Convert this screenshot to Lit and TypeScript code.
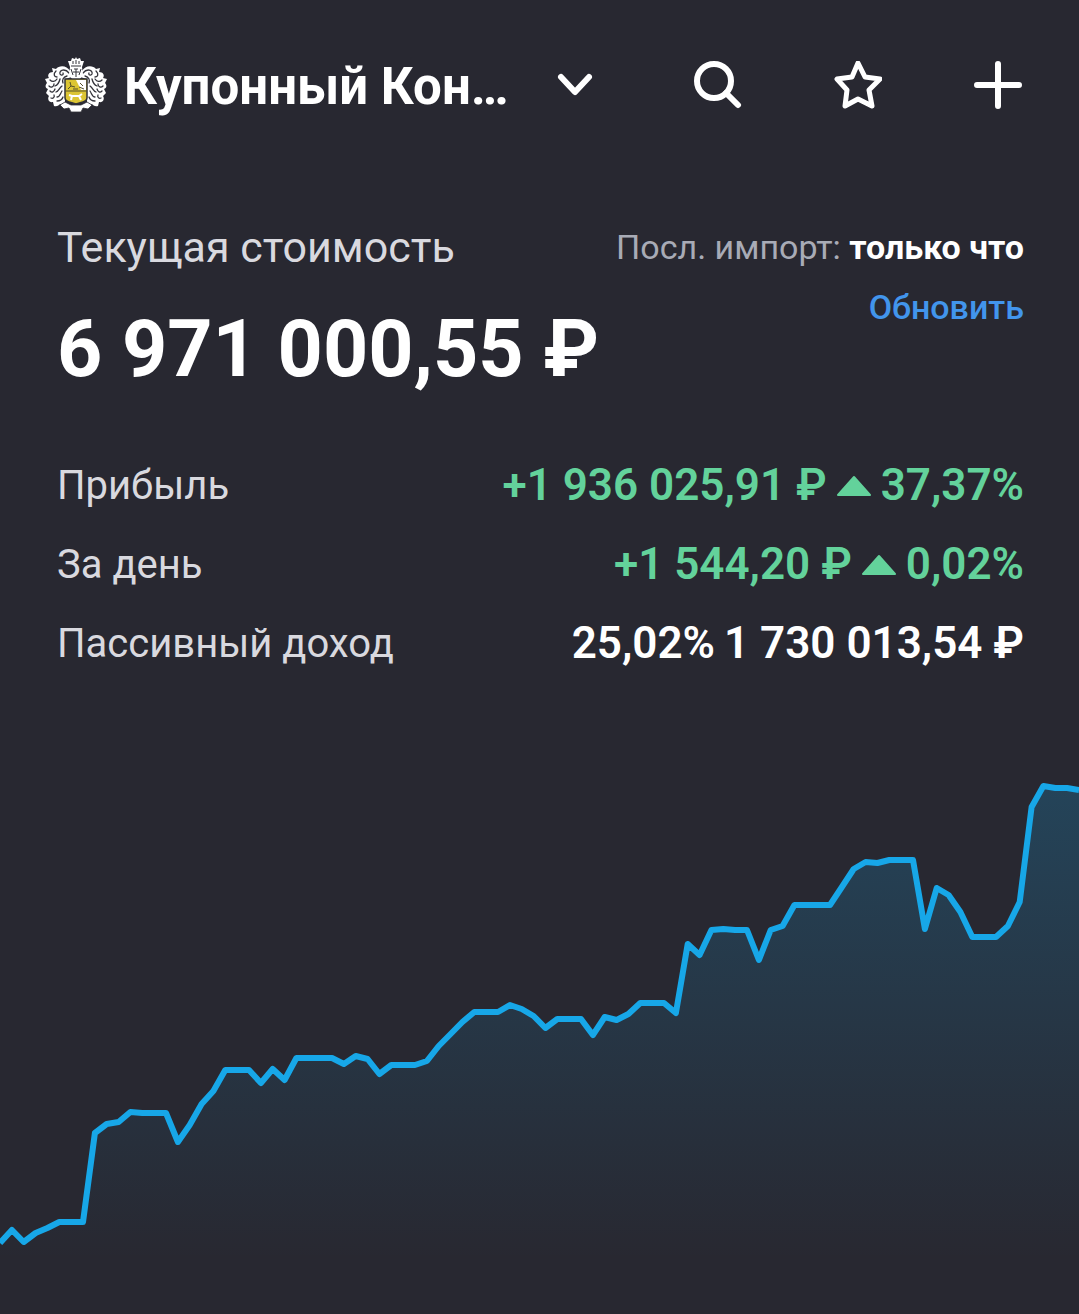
import { html, css, svg, nothing, LitElement } from 'lit'
import { customElement, property } from 'lit/decorators.js'

type Row = { label: string; amount: string; percent: string; growth: boolean }

const ROWS: readonly Row[] = [
  { label: 'Прибыль', amount: '+1 936 025,91 ₽', percent: '37,37%', growth: true },
  { label: 'За день', amount: '+1 544,20 ₽', percent: '0,02%', growth: true },
  { label: 'Пассивный доход', amount: '1 730 013,54 ₽', percent: '25,02%', growth: false },
]

// distance of every point from the top of the chart
const POINTS: readonly number[] = [
  483, 470, 482, 473, 468, 462, 462, 462, 373, 364, 362, 352, 353, 353, 353, 382, 365, 344, 331, 310, 310, 310, 323,
  309, 320, 298, 298, 298, 298, 304, 296, 299, 314, 305, 305, 305, 301, 286, 274, 262, 252, 252, 252, 245, 249, 256,
  268, 259, 259, 259, 275, 257, 260, 254, 243, 243, 243, 253, 184, 195, 170, 169, 170, 170, 200, 170, 166, 145, 145,
  145, 145, 127, 109, 102, 103, 100, 100, 100, 169, 128, 135, 152, 177, 177, 177, 166, 142, 47, 26, 28, 28, 30,
]

@customElement('value-chart')
export class ValueChart extends LitElement {
  static styles = css`
    :host {
      display: block;
    }

    svg {
      display: block;
      width: 100%;
      height: auto;
    }

    .line {
      fill: none;
      stroke: #17a7e8;
      stroke-width: 6;
      stroke-linejoin: round;
    }
  `

  @property({ attribute: false })
  points: readonly number[] = []

  render() {
    const width = 1079
    const height = 554
    const step = width / (this.points.length - 1)
    const line = this.points.map((y, i) => `${(i * step).toFixed(1)},${y}`).join(' ')

    return html`
      <svg viewBox="0 0 ${width} ${height}" role="img" aria-label="График стоимости">
        <defs>
          <linearGradient id="fade" gradientUnits="userSpaceOnUse" x1="0" y1="26" x2="0" y2="500">
            <stop offset="0" stop-color="#17a7e8" stop-opacity="0.22" />
            <stop offset="1" stop-color="#17a7e8" stop-opacity="0" />
          </linearGradient>
        </defs>
        <polygon points="0,${height} ${line} ${width},${height}" fill="url(#fade)" />
        <polyline class="line" points=${line} />
      </svg>
    `
  }
}

// one side of the mantling around the shield, mirrored for the other one
const mantling = svg`
  <path fill="#fff" d="M25 14 C22 8 14 8 11 12 L7 11 L8 15 C4 15 2 18 4 21 L0 22 L2 26 C0 28 0 31 3 32 L1 36 L4 39 C2 42 4 46 8 45 L9 49 C12 50 14 48 15 47 L20 48 L20 22 L27 20 Z" />
  <g fill="none" stroke="#34343b" stroke-width="1.3" stroke-linecap="round">
    <path d="M24 16 C20 11 14 13 15 17 C16 19 19 18 18 16" />
    <path d="M11 14 C8 17 9 20 12 20 M12 22 C10 25 7 25 5 23" />
    <path d="M22 19 C18 20 17 23 18 26 M15 22 C14 26 13 28 10 29 M4 29 C6 31 9 30 9 27" />
    <path d="M17 29 C14 31 14 34 11 35 M5 34 C7 36 9 35 10 32" />
    <path d="M17 34 C15 37 15 40 12 40 M6 41 C8 42 10 40 9 38" />
    <path d="M18 40 C17 43 15 44 12 44" />
  </g>
`

const crest = html`
  <svg class="crest" viewBox="0 0 62 56" aria-hidden="true">
    ${mantling}
    <g transform="matrix(-1 0 0 1 62 0)">${mantling}</g>
    <path fill="#fff" d="M25 10 L23 4 L26 4 L27 1 L30 2 L31 0 L32 2 L35 1 L36 4 L39 4 L37 10 L38 18 L35 22 H27 L24 18 Z" />
    <g fill="none" stroke="#34343b" stroke-width="1">
      <path d="M26 9 H36 M28 4 V7 M31 3 V7 M34 4 V7" />
      <path d="M26 12 L28 18 M36 12 L34 18 M29 12 H33 M31 12 V20 M28 15 H34" />
    </g>
    <path fill="#dcc533" stroke="#303037" stroke-width="1.5" d="M20 22 H42 V41 C42 45 37 45 31 47 C25 45 20 45 20 41 Z" />
    <path fill="#fff" d="M31 23 H41 V33 H36 Z" />
    <path d="M20 34 H42" stroke="#55502b" />
    <path d="M23 32 L26 29 L25 25 M26 29 L30 30 M28 32 H33 M35 26 L38 29 M34 30 L39 32" fill="none" stroke="#55502b" />
    <path d="M24 38 L27 39 L34 39 L37 37 M27 39 L26 43 M34 39 L36 43" fill="none" stroke="#fff" stroke-width="2" />
    <path fill="#fff" stroke="#303037" stroke-width="0.8" d="M15 48 L20 45 L26 48 H36 L42 45 L47 48 L43 52 L38 51 L36 55 H26 L24 51 L19 52 Z" />
  </svg>
`

@customElement('app-root')
export class AppRoot extends LitElement {
  static styles = css`
    :host {
      display: block;
      min-height: 100vh;
      background: #282831;
      color: #fff;
      font-family: Roboto, 'Noto Sans', sans-serif;
    }

    button {
      margin: 0;
      padding: 0;
      border: none;
      background: none;
      color: inherit;
      font: inherit;
      cursor: pointer;
    }

    svg {
      display: block;
      flex: none;
    }

    .header {
      display: flex;
      align-items: center;
      gap: 92px;
      height: 170px;
      padding: 0 57px 0 45px;
    }

    .account {
      display: flex;
      flex: 1;
      align-items: center;
      min-width: 0;
      text-align: left;
    }

    .crest {
      width: 62px;
      height: 56px;
    }

    .name {
      margin-left: 17px;
      padding-top: 4px;
      font-size: 51px;
      font-weight: 700;
      line-height: 60px;
      white-space: nowrap;
    }

    .chevron {
      margin-left: 48px;
    }

    .icon {
      fill: none;
      stroke: #fff;
      stroke-width: 6;
      stroke-linecap: round;
      stroke-linejoin: round;
    }

    .summary {
      padding: 51px 55px 0 57px;
    }

    .top {
      display: flex;
      justify-content: space-between;
      line-height: 52px;
    }

    .caption {
      margin: 0;
      color: #d9d9df;
      font-size: 43px;
      font-weight: 400;
    }

    .total {
      margin: 28px 0 0;
      font-size: 79px;
      font-weight: 700;
      line-height: 96px;
      white-space: nowrap;
    }

    .import {
      display: flex;
      flex-direction: column;
      align-items: flex-end;
      gap: 8px;
      color: #a8abb6;
      font-size: 34px;
      white-space: nowrap;
    }

    .import p {
      margin: 0;
    }

    .import strong {
      color: #fff;
      font-weight: 700;
    }

    .refresh {
      color: #4295ec;
      font-weight: 500;
    }

    .rows {
      margin: 49px 0 77px;
    }

    .row {
      display: flex;
      align-items: center;
      justify-content: space-between;
      line-height: 79px;
      white-space: nowrap;
    }

    dt {
      color: #d9d9df;
      font-size: 40px;
    }

    dd {
      display: flex;
      align-items: center;
      gap: 9px;
      margin: 0;
      font-size: 44px;
      font-weight: 600;
    }

    .growth {
      color: #63d29b;
    }
  `

  render() {
    return html`
      <header class="header">
        <button type="button" class="account" aria-haspopup="listbox">
          ${crest}
          <span class="name">Купонный Кон…</span>
          <svg class="icon chevron" width="36" height="24" viewBox="0 0 36 24"><path d="M4 4 L18 19 L32 4" /></svg>
        </button>
        <button type="button" aria-label="Поиск">
          <svg class="icon" width="48" height="48" viewBox="0 0 48 48">
            <circle cx="20" cy="20" r="17" />
            <path d="M32 32 L44 44" />
          </svg>
        </button>
        <button type="button" aria-label="Избранное">
          <svg class="icon" width="48" height="48" viewBox="0 0 48 48">
            <path d="M24 2 L31 16 L46 18 L35 29 L38 45 L24 38 L11 45 L13 29 L3 18 L18 16 Z" stroke-width="5" />
          </svg>
        </button>
        <button type="button" aria-label="Добавить">
          <svg class="icon" width="48" height="48" viewBox="0 0 48 48"><path d="M24 3 V45 M3 24 H45" /></svg>
        </button>
      </header>
      <main>
        <section class="summary">
          <div class="top">
            <div>
              <h1 class="caption">Текущая стоимость</h1>
              <p class="total">6 971 000,55 ₽</p>
            </div>
            <div class="import">
              <p>Посл. импорт: <strong>только что</strong></p>
              <button type="button" class="refresh">Обновить</button>
            </div>
          </div>
          <dl class="rows">${ROWS.map((row) => this._row(row))}</dl>
        </section>
        <value-chart .points=${POINTS}></value-chart>
      </main>
    `
  }

  private _row({ label, amount, percent, growth }: Row) {
    return html`
      <div class="row">
        <dt>${label}</dt>
        <dd class=${growth ? 'growth' : nothing}>
          <span>${growth ? amount : percent}</span>
          ${growth
            ? html`<svg width="36" height="22" viewBox="0 0 36 22">
                <path d="M18 2 L34 20 H2 Z" fill="currentColor" stroke="currentColor" stroke-width="2" stroke-linejoin="round" />
              </svg>`
            : nothing}
          <span>${growth ? percent : amount}</span>
        </dd>
      </div>
    `
  }
}
